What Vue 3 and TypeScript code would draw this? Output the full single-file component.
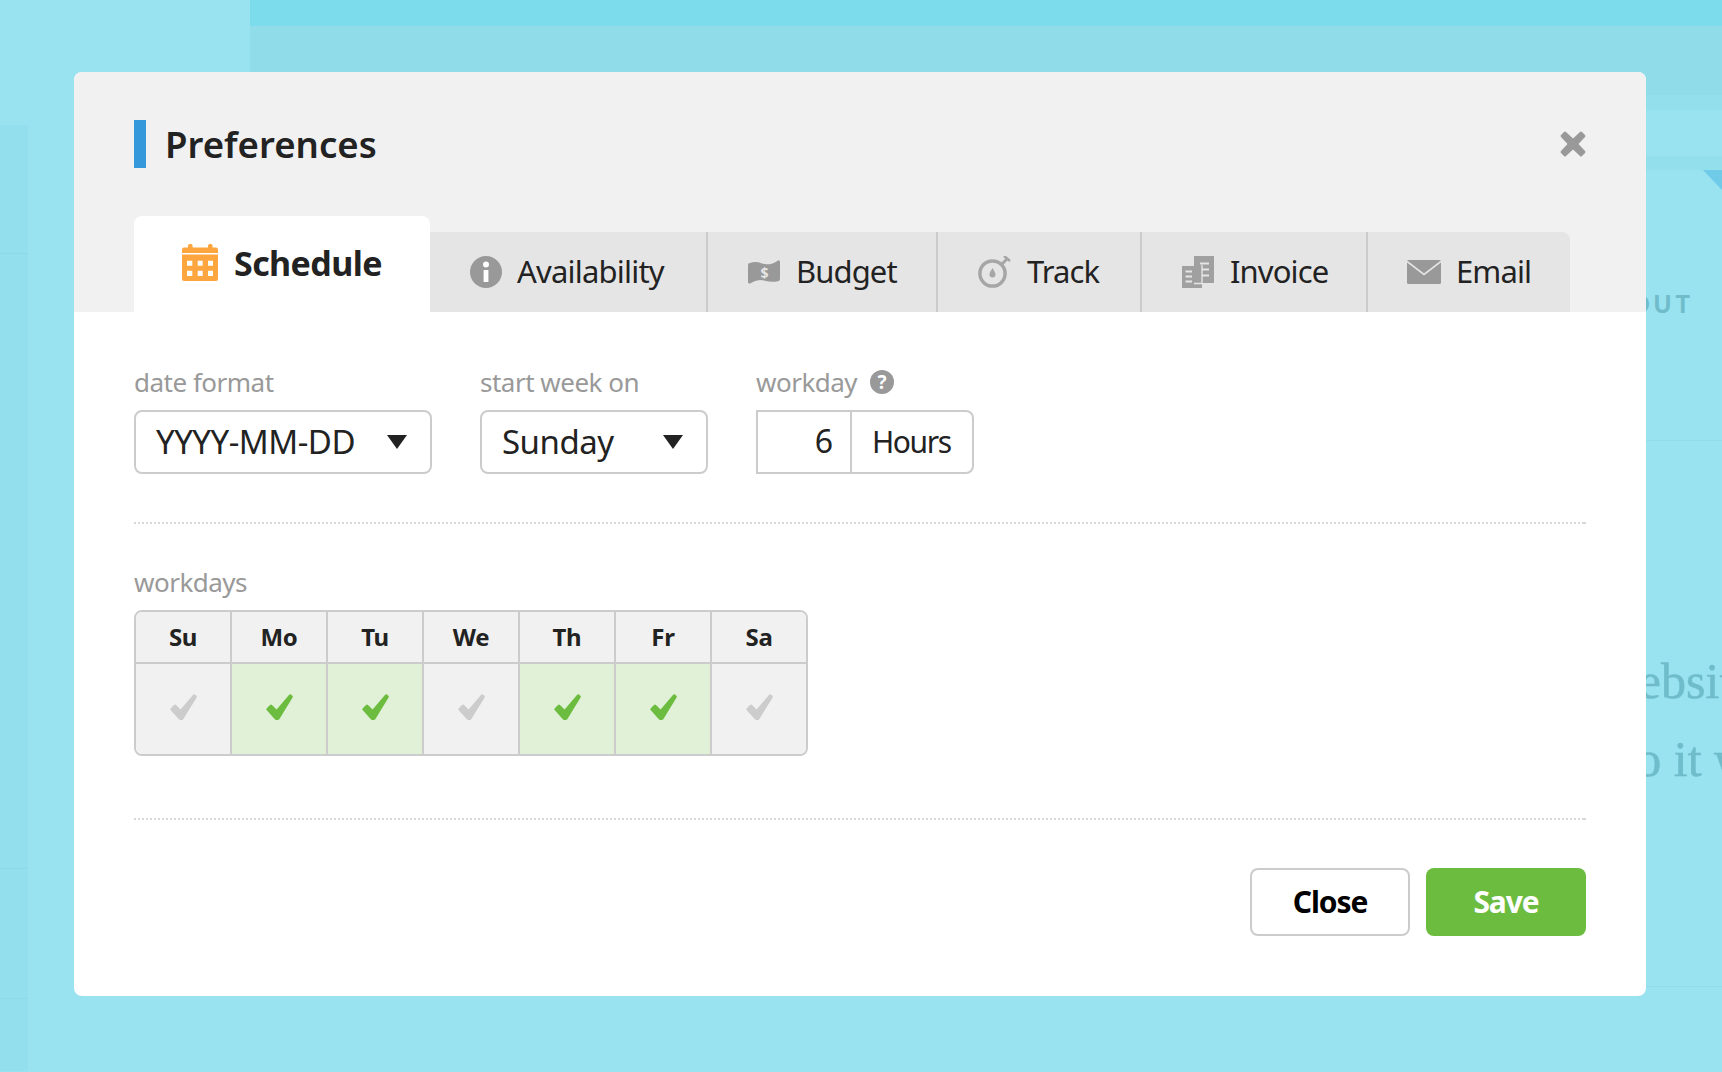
<script setup lang="ts">
interface Tab { id: string; label: string; active?: boolean }
const tabs: Tab[] = [
  { id: 'schedule', label: 'Schedule', active: true },
  { id: 'availability', label: 'Availability' },
  { id: 'budget', label: 'Budget' },
  { id: 'track', label: 'Track' },
  { id: 'invoice', label: 'Invoice' },
  { id: 'email', label: 'Email' },
]
const days = [
  { name: 'Su', on: false },
  { name: 'Mo', on: true },
  { name: 'Tu', on: true },
  { name: 'We', on: false },
  { name: 'Th', on: true },
  { name: 'Fr', on: true },
  { name: 'Sa', on: false },
]
</script>

<template>
  <div class="page">
    <div class="backdrop">
      <div class="back-side">
        <div class="side-strip">
          <div class="side-cell c1"></div>
          <div class="side-cell c2"></div>
          <div class="side-cell c3"></div>
          <div class="side-cell c4"></div>
        </div>
      </div>
      <div class="back-main">
        <div class="band b1"></div>
        <div class="band b2"></div>
        <div class="band b3"></div>
        <div class="band b4"></div>
        <div class="band b5"></div>
        <div class="corner"></div>
        <div class="about">ABOUT</div>
        <div class="rule r1"></div>
        <p class="back-text t1">Build and grow your website</p>
        <p class="back-text t2">and we will help you to do it well</p>
        <div class="rule r2"></div>
      </div>
    </div>

    <section class="modal">
      <header class="head">
        <div class="title-row">
          <span class="title-bar"></span>
          <h1 class="title">Preferences</h1>
          <svg class="close-x" viewBox="0 0 26 26" width="26" height="26">
            <path d="M6 1 L13 7.5 L20 1 Q21 0 22 1 L25 4 Q26 5 25 6 L18.5 13 L25 20 Q26 21 25 22 L22 25 Q21 26 20 25 L13 18.5 L6 25 Q5 26 4 25 L1 22 Q0 21 1 20 L7.5 13 L1 6 Q0 5 1 4 L4 1 Q5 0 6 1 Z" fill="#999" />
          </svg>
        </div>
        <nav class="tabs">
          <div v-for="t in tabs" :key="t.id" class="tab" :class="[t.id, { active: t.active }]">
            <svg v-if="t.id === 'schedule'" class="ico" viewBox="0 0 36 38" width="36" height="38">
              <path fill="#fda63f" d="M6 4.5 V2.4 a2.4 2.4 0 0 1 4.6 0 V4.5 H26 V2.4 a2.4 2.4 0 0 1 4.6 0 V4.5 H34 a2 2 0 0 1 2 2 V10 H0 V6.5 a2 2 0 0 1 2 -2 Z" />
              <path fill="#fda63f" fill-rule="evenodd" d="M0 11.5 H36 V36 a2 2 0 0 1 -2 2 H2 a2 2 0 0 1 -2 -2 Z M5 17.7 v5 h5.3 v-5 Z M15.7 17.7 v5 h5 v-5 Z M26 17.7 v5 h5 v-5 Z M5 27.7 v5.3 h5.3 v-5.3 Z M15.7 27.7 v5.3 h5 v-5.3 Z M26 27.7 v5.3 h5 v-5.3 Z" />
            </svg>
            <svg v-else-if="t.id === 'availability'" class="ico" viewBox="0 0 32 32" width="32" height="32">
              <circle cx="16" cy="16" r="16" fill="#999" />
              <circle cx="16" cy="8.5" r="3" fill="#fff" />
              <rect x="13.6" y="14" width="4.8" height="12" fill="#fff" />
            </svg>
            <svg v-else-if="t.id === 'budget'" class="ico" viewBox="0 0 32 24" width="32" height="24">
              <path fill="#999" d="M0 5 Q0 3 2 3 Q8 1 14 3.5 Q22 6 30 0.4 Q32 0 32 2 V19 Q32 21 30 21.2 Q23 22.5 16 20.5 Q9 18.5 2 23.5 Q0 24 0 22 Z" />
              <text x="16" y="17.5" text-anchor="middle" font-size="14" font-weight="700" fill="#e5e5e5" font-family="'Noto Sans', sans-serif">$</text>
            </svg>
            <svg v-else-if="t.id === 'track'" class="ico" viewBox="0 0 33 32" width="33" height="32">
              <circle cx="14.5" cy="17.5" r="12.6" fill="none" stroke="#a6a6a6" stroke-width="3.5" />
              <path d="M23.5 8.5 L29 3" stroke="#a6a6a6" stroke-width="3" fill="none" />
              <path d="M26 0 L32 5" fill="none" stroke="#a6a6a6" stroke-width="2.6" />
              <path d="M14.5 12 C15.800 14.500 17.500 16.500 17.500 18.500 A3 3 0 0 1 11.500 18.500 C11.500 16.500 13.200 14.500 14.500 12 Z" fill="#a6a6a6" />
            </svg>
            <svg v-else-if="t.id === 'invoice'" class="ico" viewBox="0 0 32 32" width="32" height="32">
              <rect x="12" y="0" width="20" height="27" fill="#a0a0a0" />
              <path d="M18 7.5 H27 M18 13.5 H27 M18 19.5 H27" stroke="#e5e5e5" stroke-width="2.2" />
              <rect x="0" y="10" width="20" height="22" fill="#a0a0a0" />
              <path d="M20 9 V27.5 H12" stroke="#e5e5e5" stroke-width="1.4" fill="none" />
              <path d="M3.5 15.5 H10 M3.5 20.5 H10 M3.5 25.5 H10" stroke="#e5e5e5" stroke-width="2" />
            </svg>
            <svg v-else class="ico" viewBox="0 0 34 24" width="34" height="24">
              <rect width="34" height="24" rx="1.5" fill="#999" />
              <path d="M0 1.5 L17 14.5 L34 1.5" fill="none" stroke="#e5e5e5" stroke-width="1.6" />
            </svg>
            <span class="tab-label">{{ t.label }}</span>
          </div>
        </nav>
      </header>

      <div class="body">
        <div class="fields">
          <div class="field w1">
            <label class="lbl">date format</label>
            <div class="select">
              <span>YYYY-MM-DD</span>
              <i class="caret"></i>
            </div>
          </div>
          <div class="field w2">
            <label class="lbl">start week on</label>
            <div class="select">
              <span>Sunday</span>
              <i class="caret"></i>
            </div>
          </div>
          <div class="field w3">
            <label class="lbl">workday <span class="help">?</span></label>
            <div class="combo">
              <span class="num">6</span>
              <span class="unit">Hours</span>
            </div>
          </div>
        </div>

        <div class="dots first"></div>

        <label class="lbl days-lbl">workdays</label>
        <div class="days">
          <div v-for="d in days" :key="d.name" class="day">
            <div class="day-name">{{ d.name }}</div>
            <div class="day-cell" :class="{ on: d.on }">
              <svg viewBox="0 0 27 26" width="27" height="26">
                <path d="M23.4 0.6 Q24 0 25 0.6 L26.4 1.8 Q27.2 2.5 26.6 3.4 L13.6 24.8 Q12.8 26 11.6 26 H10.4 Q9.4 26 8.6 25 L0.6 16 Q0 15 0.8 14.2 L4 11 Q5 10.2 6 11 L10.6 15.4 Z" />
              </svg>
            </div>
          </div>
        </div>

        <div class="dots second"></div>

        <div class="actions">
          <button class="btn ghost" type="button">Close</button>
          <button class="btn save" type="button">Save</button>
        </div>
      </div>
    </section>
  </div>
</template>

<style>
html, body { margin: 0; padding: 0; }
</style>

<style scoped>
.page {
  position: relative;
  width: 1722px;
  height: 1072px;
  overflow: hidden;
  background: #99e2ef;
  font-family: "Noto Sans", "Open Sans", sans-serif;
  color: #222;
}
.backdrop { display: flex; height: 100%; }
.back-side { width: 250px; flex: none; padding-top: 125px; box-sizing: border-box; }
.side-strip { width: 28px; background: #94dfed; }
.side-cell { border-bottom: 1px solid #8ed9e7; }
.c1 { height: 128px; }
.c2 { height: 614px; }
.c3 { height: 129px; }
.c4 { height: 72px; border-bottom: 0; }
.back-main { flex: 1; display: flex; flex-direction: column; min-width: 0; }
.band { flex: none; }
.b1 { height: 26px; background: #7cdcec; }
.b2 { height: 69px; background: #90dce9; }
.b3 { height: 15px; background: #94dfec; }
.b4 { height: 46px; }
.b5 { height: 14px; background: #93dfec; }
.corner {
  width: 19px;
  height: 20px;
  align-self: flex-end;
  background: #70cbe8;
  clip-path: polygon(0 0, 100% 0, 100% 100%);
}
.about {
  margin-top: 99px;
  align-self: flex-end;
  margin-right: 28px;
  font-family: Lato, sans-serif;
  font-weight: 900;
  font-size: 24px;
  line-height: 30px;
  letter-spacing: 4px;
  color: #70bccb;
}
.rule { height: 1px; background: #92dcea; flex: none; }
.r1 { margin-top: 121px; }
.r2 { margin-top: 188px; }
.back-text {
  margin: 0;
  white-space: nowrap;
  font-family: "Liberation Serif", serif;
  font-size: 50px;
  line-height: 78px;
  color: #6fbccb;
  -webkit-text-stroke: 0.5px #6fbccb;
}
.t1 { margin-top: 201px; margin-left: 925px; }
.t2 { margin-left: 878px; }

.modal {
  position: absolute;
  left: 74px;
  top: 72px;
  width: 1572px;
  height: 924px;
  background: #fff;
  border-radius: 8px;
  overflow: hidden;
}
.head { background: #f1f1f1; padding: 48px 60px 0; height: 240px; box-sizing: border-box; }
.title-row { display: flex; align-items: center; height: 48px; }
.title-bar { width: 12px; height: 48px; background: #3498db; flex: none; }
.title { margin: 0 0 0 19px; font-size: 36.6px; line-height: 48px; font-weight: 600; color: #222; flex: 1; }
.close-x { flex: none; }
.tabs {
  display: grid;
  grid-template-columns: 296px 276px 230px 204px 226px 204px;
  margin-top: 48px;
  height: 96px;
  width: 1436px;
}
.tab {
  display: flex;
  align-items: center;
  align-self: end;
  height: 80px;
  background: #e5e5e5;
  border-left: 2px solid #ccc;
  box-sizing: border-box;
  padding-left: 40px;
  font-size: 31px;
  letter-spacing: -0.9px;
  line-height: 40px;
  gap: 16px;
}
.tab.availability { border-left: 0; padding-left: 40px; gap: 15px; letter-spacing: -0.8px; }
.tab.email { border-top-right-radius: 8px; padding-left: 39px; gap: 15px; }
.tab.active {
  height: 96px;
  background: #fff;
  border-left: 0;
  border-radius: 8px 8px 0 0;
  padding-left: 48px;
  gap: 16px;
  font-size: 34px;
  letter-spacing: -0.6px;
  font-weight: 700;
  padding-bottom: 5px;
}
.ico { flex: none; display: block; }
.tab-label { display: block; margin-top: -2px; }
.tab.active .tab-label { margin-top: 2px; }

.body { padding: 52px 60px 0; }
.fields { display: flex; gap: 48px; }
.field { display: flex; flex-direction: column; }
.w1 { width: 298px; }
.w2 { width: 228px; }
.w3 { width: 218px; }
.lbl {
  display: flex;
  align-items: center;
  height: 36px;
  font-size: 26px;
  letter-spacing: -0.5px;
  line-height: 36px;
  color: #999;
  margin-bottom: 10px;
}
.days-lbl { margin-top: -1px; margin-bottom: 11px; }
.help {
  display: inline-flex;
  align-items: center;
  justify-content: center;
  width: 24px;
  height: 24px;
  margin-left: 13px;
  border-radius: 50%;
  background: #999;
  color: #fff;
  font-size: 19px;
  font-weight: 700;
  line-height: 24px;
  letter-spacing: 0;
}
.select {
  height: 64px;
  box-sizing: border-box;
  border: 2px solid #ccc;
  border-radius: 8px;
  display: flex;
  align-items: center;
  justify-content: space-between;
  padding: 0 23px 0 20px;
  font-size: 33px;
  letter-spacing: -0.5px;
  background: #fff;
}
.select span { margin-top: -2px; }
.caret {
  width: 0;
  height: 0;
  border-left: 10px solid transparent;
  border-right: 10px solid transparent;
  border-top: 14px solid #222;
}
.combo {
  height: 64px;
  box-sizing: border-box;
  border: 2px solid #ccc;
  border-radius: 0 8px 8px 0;
  display: flex;
  align-items: stretch;
}
.num {
  width: 94px;
  box-sizing: border-box;
  padding-right: 17px;
  text-align: right;
  font-size: 32px;
  line-height: 58px;
  border-right: 2px solid #ccc;
}
.unit { padding-left: 20px; font-size: 30px; letter-spacing: -1.4px; line-height: 60px; }

.dots {
  height: 2px;
  background:
    linear-gradient(#d8d8d8, #d8d8d8) right top / 2px 2px no-repeat,
    repeating-linear-gradient(90deg, #d8d8d8 0 2px, transparent 2px 4px);
}
.dots.first { margin-top: 48px; margin-bottom: 41px; }
.dots.second { margin-top: 62px; margin-bottom: 48px; }

.days {
  display: flex;
  width: 674px;
  height: 146px;
  box-sizing: border-box;
  border: 2px solid #ccc;
  border-radius: 8px;
  overflow: hidden;
  margin-top: -1px;
}
.day { width: 96px; flex: none; border-left: 2px solid #ccc; box-sizing: border-box; display: flex; flex-direction: column; }
.day:first-child { width: 94px; border-left: 0; }
.day-name {
  height: 50px;
  line-height: 50px;
  text-align: center;
  font-size: 24px;
  font-weight: 700;
  letter-spacing: -0.3px;
  background: #f1f1f1;
  border-bottom: 2px solid #ccc;
  flex: none;
}
.day-cell {
  flex: 1;
  background: #f1f1f1;
  display: flex;
  align-items: center;
  justify-content: center;
  padding-bottom: 4px;
  box-sizing: border-box;
}
.day-cell svg { fill: #ccc; display: block; }
.day-cell.on { background: #e1f1d8; }
.day-cell.on svg { fill: #6cbc3f; }

.actions { display: flex; justify-content: flex-end; gap: 16px; }
.btn {
  width: 160px;
  height: 68px;
  border-radius: 8px;
  font-family: inherit;
  font-size: 30px;
  font-weight: 700;
  letter-spacing: -1.1px;
  box-sizing: border-box;
  padding: 0 0 2px;
}
.ghost { background: #fff; border: 2px solid #ccc; color: #000; }
.save { background: #6cbc3f; border: 0; color: #fff; }
</style>
